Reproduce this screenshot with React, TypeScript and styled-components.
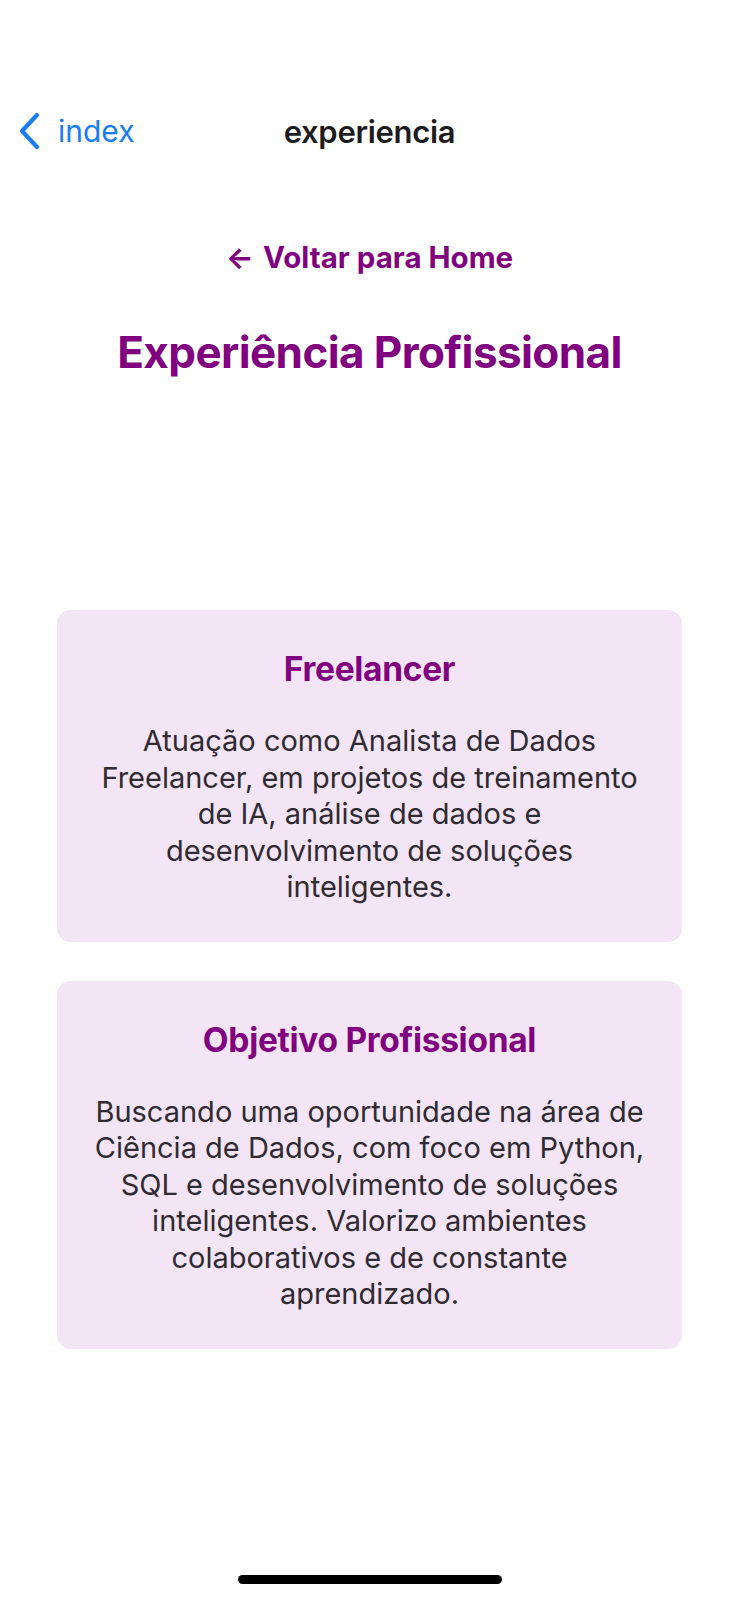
import styled, { createGlobalStyle } from "styled-components";

const GlobalStyle = createGlobalStyle`
  html, body {
    margin: 0;
    padding: 0;
    background: #fff;
  }
  * {
    box-sizing: border-box;
  }
`;

const Page = styled.div`
  width: 739px;
  min-height: 1600px;
  display: flex;
  flex-direction: column;
  background: #fff;
  font-family: Inter, "Noto Sans", "Liberation Sans", sans-serif;
`;

const StatusSpace = styled.div`
  height: 88px;
`;

const NavBar = styled.div`
  height: 86px;
  display: grid;
  grid-template-columns: 1fr auto 1fr;
  align-items: center;
`;

const BackButton = styled.a`
  display: flex;
  align-items: center;
  gap: 17px;
  padding-left: 17px;
  color: #1a7cf5;
  font-size: 30px;
  text-decoration: none;
  cursor: pointer;
`;

const NavTitle = styled.h1`
  margin: 0;
  font-size: 31px;
  font-weight: 600;
  color: #1c1c1e;
  letter-spacing: -0.3px;
`;

const Content = styled.main`
  display: flex;
  flex-direction: column;
  align-items: center;
  padding: 65px 57px 0;
`;

const HomeLink = styled.a`
  display: flex;
  align-items: center;
  gap: 9px;
  line-height: 36px;
  font-size: 29.5px;
  font-weight: 700;
  color: #800080;
  text-decoration: none;
  cursor: pointer;
`;

const PageTitle = styled.h2`
  margin: 50px 0 0;
  line-height: 54px;
  font-size: 44px;
  font-weight: 700;
  color: #800080;
  letter-spacing: -0.6px;
`;

const CardList = styled.div`
  width: 100%;
  display: flex;
  flex-direction: column;
  gap: 39px;
  margin-top: 231px;
`;

const Card = styled.section`
  width: 100%;
  background: #f3e5f5;
  border-radius: 14px;
  padding: 38px 16px 36px;
  text-align: center;
`;

const CardTitle = styled.h3`
  margin: 0 0 33px;
  line-height: 42px;
  font-size: 33.5px;
  font-weight: 700;
  color: #800080;
  letter-spacing: -0.3px;
`;

const CardText = styled.p`
  margin: 0;
  font-size: 29px;
  line-height: 36.5px;
  color: #302a33;
`;

const HomeIndicator = styled.div`
  margin: auto auto 16px;
  width: 264px;
  height: 9px;
  border-radius: 5px;
  background: #000;
`;

const experiences = [
  {
    title: "Freelancer",
    lines: [
      "Atuação como Analista de Dados",
      "Freelancer, em projetos de treinamento",
      "de IA, análise de dados e",
      "desenvolvimento de soluções",
      "inteligentes.",
    ],
  },
  {
    title: "Objetivo Profissional",
    lines: [
      "Buscando uma oportunidade na área de",
      "Ciência de Dados, com foco em Python,",
      "SQL e desenvolvimento de soluções",
      "inteligentes. Valorizo ambientes",
      "colaborativos e de constante",
      "aprendizado.",
    ],
  },
];

const App = () => {
  return (
    <Page>
      <GlobalStyle />
      <StatusSpace />
      <NavBar>
        <BackButton>
          <svg width="24" height="38" viewBox="0 0 24 38">
            <path
              d="M20 3 L5 19 L20 35"
              fill="none"
              stroke="#1a7cf5"
              strokeWidth="4.2"
              strokeLinecap="round"
              strokeLinejoin="round"
            />
          </svg>
          index
        </BackButton>
        <NavTitle>experiencia</NavTitle>
        <div />
      </NavBar>
      <Content>
        <HomeLink>
          <span>←</span>
          Voltar para Home
        </HomeLink>
        <PageTitle>Experiência Profissional</PageTitle>
        <CardList>
          {experiences.map((item) => (
            <Card key={item.title}>
              <CardTitle>{item.title}</CardTitle>
              <CardText>
                {item.lines.map((line, i) => (
                  <span key={i}>
                    {line}
                    {i < item.lines.length - 1 && <br />}
                  </span>
                ))}
              </CardText>
            </Card>
          ))}
        </CardList>
      </Content>
      <HomeIndicator />
    </Page>
  );
};

export default App;
